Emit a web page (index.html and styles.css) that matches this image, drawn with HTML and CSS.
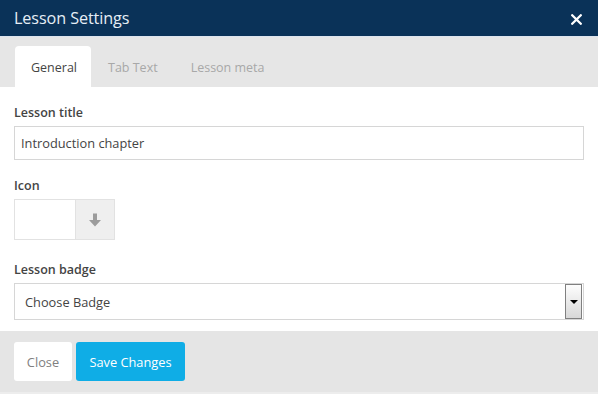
FILE: index.html
```html
<!DOCTYPE html>
<html lang="en">
<head>
  <meta charset="UTF-8" />
  <meta name="viewport" content="width=device-width, initial-scale=1.0"/>
  <title>Lesson Settings</title>
  <link rel="stylesheet" href="styles.css">
</head>
<body>
  <div class="modal">
    <div class="modal-header">
      <h1>Lesson Settings</h1>
      <svg class="fechar" width="11" height="11" viewBox="0 0 11 11">
        <path d="M1.2 1.2l8.6 8.6M9.8 1.2l-8.6 8.6" stroke="white" stroke-width="2.3" stroke-linecap="round"/>
      </svg>
    </div>

    <div class="tabs">
      <div class="tab ativa">General</div>
      <div class="tab">Tab Text</div>
      <div class="tab">Lesson meta</div>
    </div>

    <div class="modal-body">
      <label class="rotulo">Lesson title</label>
      <input type="text" class="campo" value="Introduction chapter">

      <label class="rotulo">Icon</label>
      <div class="icone-picker">
        <div class="icone-preview"></div>
        <div class="icone-btn">
          <svg width="16" height="16" viewBox="0 0 16 16">
            <path d="M6 1.5h4v6.5h4L8 14.5 2 8h4z" fill="#9c9c9c"/>
          </svg>
        </div>
      </div>

      <label class="rotulo">Lesson badge</label>
      <div class="select">
        <span>Choose Badge</span>
        <div class="select-seta"><i></i></div>
      </div>
    </div>

    <div class="modal-footer">
      <button class="btn-fechar">Close</button>
      <button class="btn-salvar">Save Changes</button>
    </div>
  </div>
</body>
</html>
```

FILE: styles.css
```css
body {
  margin: 0;
  font-family: "Open Sans", Arial, sans-serif;
  background: white;
  color: #333;
}

.modal {
  width: 598px;
  height: 394px;
  display: flex;
  flex-direction: column;
}

.modal-header {
  height: 36px;
  background: #0a3258;
  border-bottom: 1px solid #dce4ee;
  display: flex;
  align-items: center;
  justify-content: space-between;
  padding: 0 14px;
}

.modal-header h1 {
  margin: 0;
  font-size: 16.2px;
  font-weight: normal;
  color: #e6eef6;
  letter-spacing: -0.1px;
}

.fechar {
  margin-right: 2px;
  margin-top: 2px;
}

.tabs {
  height: 50px;
  background: #e6e6e6;
  display: flex;
  align-items: flex-end;
  padding-left: 15px;
}

.tab {
  height: 41px;
  line-height: 43px;
  padding: 0 16px;
  font-size: 12.5px;
  color: #a8a8a8;
  margin-right: 1px;
}

.tab.ativa {
  background: white;
  color: #444;
  border-radius: 4px 4px 0 0;
  width: 44px;
}

.modal-body {
  flex: 1;
  padding: 17px 14px 0 14px;
}

.rotulo {
  display: block;
  font-size: 12.5px;
  font-weight: 600;
  color: #444;
  margin-bottom: 5px;
}

.campo {
  display: block;
  box-sizing: border-box;
  width: 570px;
  height: 34px;
  border: 1px solid #d6d6d6;
  padding: 0 6px;
  font-family: "Open Sans", Arial, sans-serif;
  font-size: 12.8px;
  color: #444;
  margin: 0 0 17px 0;
  outline: none;
}

.icone-picker {
  display: flex;
  width: 101px;
  height: 41px;
  margin-bottom: 21px;
}

.icone-preview {
  width: 61px;
  border: 1px solid #e2e2e2;
  border-right: none;
  box-sizing: border-box;
}

.icone-btn {
  width: 40px;
  background: #efefef;
  border: 1px solid #e2e2e2;
  box-sizing: border-box;
  display: flex;
  align-items: center;
  justify-content: center;
}

.select {
  box-sizing: border-box;
  width: 570px;
  height: 37px;
  border: 1px solid #d6d6d6;
  display: flex;
  align-items: center;
  justify-content: space-between;
  padding: 0 1px 0 10px;
  font-size: 12.8px;
  color: #444;
}

.select-seta {
  width: 15px;
  height: 33px;
  border: 1px solid #808080;
  background: linear-gradient(#fdfdfd, #d8d8d8);
  display: flex;
  align-items: center;
  justify-content: center;
}

.select-seta i {
  width: 0;
  height: 0;
  border-left: 4px solid transparent;
  border-right: 4px solid transparent;
  border-top: 4px solid black;
}

.modal-footer {
  height: 61px;
  background: #e5e5e5;
  border-bottom: 2px solid #ededed;
  display: flex;
  align-items: center;
  gap: 4px;
  padding-left: 14px;
}

button {
  height: 39px;
  border: none;
  border-radius: 3px;
  font-family: "Open Sans", Arial, sans-serif;
  font-size: 12.8px;
  cursor: pointer;
}

.btn-fechar {
  width: 58px;
  background: white;
  color: #808080;
}

.btn-salvar {
  width: 109px;
  background: #0fade6;
  color: white;
}
```
